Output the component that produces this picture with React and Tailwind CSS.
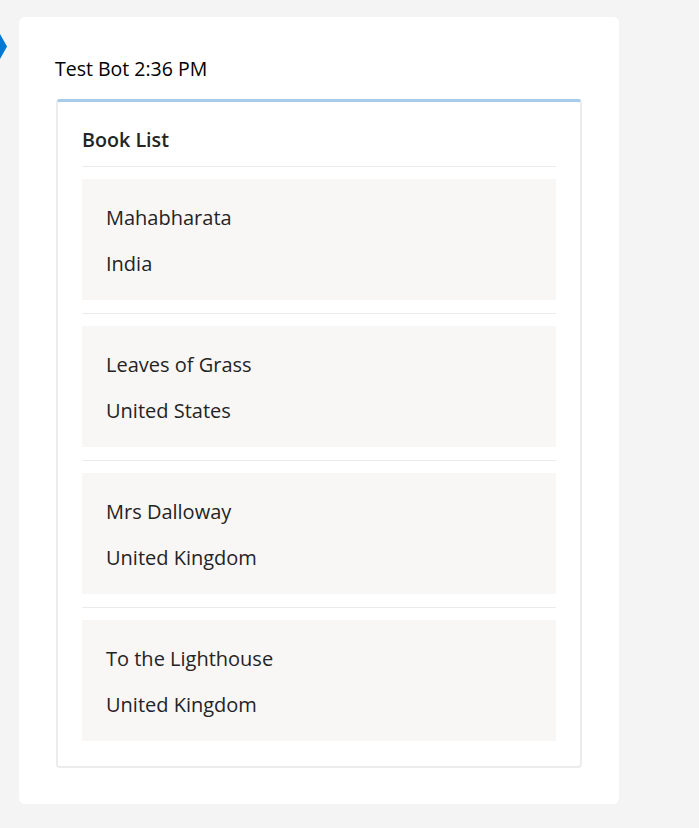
const books = [
  { title: "Mahabharata", country: "India" },
  { title: "Leaves of Grass", country: "United States" },
  { title: "Mrs Dalloway", country: "United Kingdom" },
  { title: "To the Lighthouse", country: "United Kingdom" },
];

export default function App() {
  return (
    <div
      className="relative min-h-[828px] w-full bg-[#f4f4f4] pt-[17px] pl-[19px]"
      style={{ fontFamily: '"Open Sans", "Noto Sans", sans-serif' }}
    >
      {/* bubble nub */}
      <svg className="absolute left-0 top-[34px]" width="7" height="25" viewBox="0 0 7 25">
        <path d="M0 0 L7 12.5 L0 25 Z" fill="#0078d4" />
      </svg>

      <div className="w-[600px] rounded-[6px] bg-white px-[36px] pt-[37px] pb-[36px]">
        <div className="text-[19.5px] leading-[30px] text-black">Test Bot 2:36 PM</div>

        <div className="ml-px mt-[15px] w-[526px] rounded-[4px] border-2 border-t-[3px] border-[#ececec] border-t-[#a8cbea] px-[24px] pt-[25px] pb-[25px]">
          <div className="text-[19.7px] font-semibold leading-[26px] text-[#242424]">Book List</div>
          <div className="mt-[13px] h-px bg-[#ebebeb]" />

          {books.map((b, i) => (
            <div key={b.title}>
              {i > 0 && <div className="mt-[13px] h-px bg-[#ebebeb]" />}
              <div className="mt-[12px] flex h-[121px] flex-col gap-[18px] bg-[#f8f7f6] px-[24px] pt-[25px] text-[20px] leading-[28px] text-[#242424]">
                <div className="h-[28px]">{b.title}</div>
                <div className="h-[28px]">{b.country}</div>
              </div>
            </div>
          ))}
        </div>
      </div>
    </div>
  );
}
